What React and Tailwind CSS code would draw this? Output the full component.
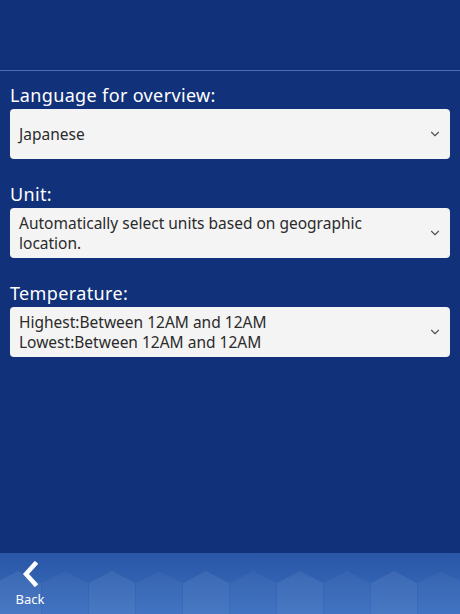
import { FiChevronDown } from "react-icons/fi";

const settings = [
  { label: "Language for overview:", lines: ["Japanese"] },
  {
    label: "Unit:",
    lines: ["Automatically select units based on geographic location."],
  },
  {
    label: "Temperature:",
    lines: ["Highest:Between 12AM and 12AM", "Lowest:Between 12AM and 12AM"],
  },
];

function SelectBox({ lines }) {
  return (
    <div className="flex items-center justify-between h-[50px] rounded-[4px] bg-[#f4f4f4] pl-[9px] pr-[8px]">
      <div className="text-[15.5px] leading-[20px] text-[#2b2b2b] pr-10">
        {lines.map((line, i) => (
          <div key={i}>{line}</div>
        ))}
      </div>
      <FiChevronDown className="text-[#555] text-[14px] shrink-0" />
    </div>
  );
}

export default function App() {
  return (
    <div
      className="w-[460px] h-[614px] flex flex-col bg-[#11317a] text-white"
      style={{ fontFamily: '"Noto Sans", "Noto Sans CJK JP", sans-serif' }}
    >
      <div className="h-[71px] border-b border-[#4d6db3]" />
      <div className="flex-1 px-[10px] pt-[11px] space-y-[22px]">
        {settings.map((s, i) => (
          <div key={i}>
            <p className="text-[18px] leading-[26px] tracking-[0.02em] mb-[1px]">
              {s.label}
            </p>
            <SelectBox lines={s.lines} />
          </div>
        ))}
      </div>
      <div className="relative h-[61px] bg-gradient-to-b from-[#2a56a6] to-[#3a6fc0] overflow-hidden">
        <svg
          className="absolute inset-0"
          width="460"
          height="61"
          viewBox="0 0 460 61"
        >
          {[0, 1, 2, 3, 4, 5, 6, 7, 8, 9].map((i) => (
            <polygon
              key={i}
              points={`${i * 47 - 5},61 ${i * 47 - 5},30 ${i * 47 + 18},18 ${
                i * 47 + 41
              },30 ${i * 47 + 41},61`}
              fill="#ffffff"
              opacity={i % 2 ? "0.04" : "0.07"}
            />
          ))}
        </svg>
        <div className="relative flex flex-col items-center w-[60px] pt-[8px]">
          <svg width="18" height="26" viewBox="0 0 18 26">
            <path
              d="M14 3 L5 13 L14 23"
              fill="none"
              stroke="white"
              strokeWidth="4.5"
              strokeLinecap="square"
            />
          </svg>
          <span className="text-[13px] leading-[16px] mt-[4px]">Back</span>
        </div>
      </div>
    </div>
  );
}
